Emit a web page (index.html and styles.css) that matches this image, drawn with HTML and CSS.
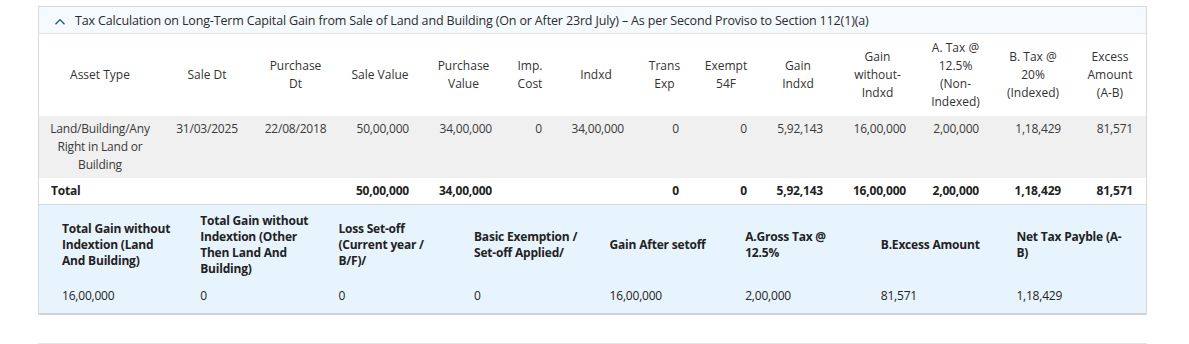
FILE: index.html
```html
<!DOCTYPE html>
<html lang="en">
<head>
<meta charset="utf-8">
<title>Tax Calculation</title>
<link rel="stylesheet" href="styles.css">
</head>
<body>
<div class="page">
  <section class="card">
    <div class="card-head">
      <svg class="chev" width="12" height="7" viewBox="0 0 12 7"><polyline points="1.5,6.2 6,1.6 10.5,6.2" fill="none" stroke="#1f4e79" stroke-width="1.3"/></svg>
      <span class="card-title">Tax Calculation on Long-Term Capital Gain from Sale of Land and Building (On or After 23rd July) – As per Second Proviso to Section 112(1)(a)</span>
    </div>
    <table class="grid">
      <colgroup>
        <col class="w122"><col class="w92"><col class="w85"><col class="w84"><col class="w83"><col class="w50"><col class="w82"><col class="w55"><col class="w68"><col class="w76"><col class="w83"><col class="w73"><col class="w82"><col class="w72">
      </colgroup>
      <thead>
        <tr>
          <th>Asset Type</th>
          <th>Sale Dt</th>
          <th>Purchase<br>Dt</th>
          <th>Sale Value</th>
          <th>Purchase<br>Value</th>
          <th>Imp.<br>Cost</th>
          <th>Indxd</th>
          <th>Trans<br>Exp</th>
          <th>Exempt<br>54F</th>
          <th>Gain<br>Indxd</th>
          <th>Gain<br>without-<br>Indxd</th>
          <th>A. Tax @<br>12.5%<br>(Non-<br>Indexed)</th>
          <th>B. Tax @<br>20%<br>(Indexed)</th>
          <th>Excess<br>Amount<br>(A-B)</th>
        </tr>
      </thead>
      <tbody>
        <tr class="data-row">
          <td class="c">Land/Building/Any<br>Right in Land or<br>Building</td>
          <td class="c">31/03/2025</td>
          <td class="c">22/08/2018</td>
          <td class="r">50,00,000</td>
          <td class="r">34,00,000</td>
          <td class="r">0</td>
          <td class="r">34,00,000</td>
          <td class="r">0</td>
          <td class="r">0</td>
          <td class="r">5,92,143</td>
          <td class="r">16,00,000</td>
          <td class="r">2,00,000</td>
          <td class="r">1,18,429</td>
          <td class="r">81,571</td>
        </tr>
        <tr class="total-row">
          <td class="l">Total</td>
          <td></td>
          <td></td>
          <td class="r">50,00,000</td>
          <td class="r">34,00,000</td>
          <td></td>
          <td></td>
          <td class="r">0</td>
          <td class="r">0</td>
          <td class="r">5,92,143</td>
          <td class="r">16,00,000</td>
          <td class="r">2,00,000</td>
          <td class="r">1,18,429</td>
          <td class="r">81,571</td>
        </tr>
      </tbody>
    </table>
    <div class="summary">
      <div class="lbl">Total Gain without<br>Indextion (Land<br>And Building)</div>
      <div class="lbl">Total Gain without<br>Indextion (Other<br>Then Land And<br>Building)</div>
      <div class="lbl">Loss Set-off<br>(Current year /<br>B/F)/</div>
      <div class="lbl">Basic Exemption /<br>Set-off Applied/</div>
      <div class="lbl">Gain After setoff</div>
      <div class="lbl">A.Gross Tax @<br>12.5%</div>
      <div class="lbl">B.Excess Amount</div>
      <div class="lbl">Net Tax Payble (A-<br>B)</div>
      <div class="val">16,00,000</div>
      <div class="val">0</div>
      <div class="val">0</div>
      <div class="val">0</div>
      <div class="val">16,00,000</div>
      <div class="val">2,00,000</div>
      <div class="val">81,571</div>
      <div class="val">1,18,429</div>
    </div>
  </section>
  <hr class="sep">
</div>
</body>
</html>
```
FILE: styles.css
```css
html, body {
  margin: 0;
  padding: 0;
  background: #ffffff;
}
body {
  font-family: "Open Sans", "Noto Sans", "Liberation Sans", sans-serif;
  font-size: 12px;
  color: #333333;
}
.page {
  padding: 6px 42px 0 38px;
}
.card {
  border: 1px solid #d6d9dc;
  border-bottom: none;
  background: #ffffff;
}
.card-head {
  display: flex;
  align-items: center;
  height: 26px;
  padding-left: 15px;
  background: #f5faff;
  border-bottom: 1px solid #dfe5eb;
}
.chev {
  display: block;
  margin-right: 9px;
  margin-top: 3px;
}
.card-title {
  font-size: 12.5px;
  color: #2b2b2b;
  white-space: nowrap;
  letter-spacing: -0.15px;
}
.grid {
  width: 100%;
  border-collapse: collapse;
  table-layout: fixed;
}
.w122 { width: 122px; }
.w92 { width: 92px; }
.w85 { width: 85px; }
.w84 { width: 84px; }
.w83 { width: 83px; }
.w50 { width: 50px; }
.w82 { width: 82px; }
.w55 { width: 55px; }
.w68 { width: 68px; }
.w76 { width: 76px; }
.w73 { width: 73px; }
.w72 { width: 72px; }
.grid th {
  font-weight: normal;
  text-align: center;
  vertical-align: middle;
  padding: 5px 0;
  line-height: 18px;
  color: #333333;
  white-space: nowrap;
}
.grid td {
  padding: 4px 0;
  line-height: 18px;
  vertical-align: top;
  white-space: nowrap;
  letter-spacing: -0.2px;
}
.grid td.c { text-align: center; }
.grid td.r { text-align: right; padding-right: 13px; }
.grid td.l { text-align: left; padding-left: 12px; }
.data-row td {
  background: #f0f0f0;
  color: #3a3a3a;
}
.total-row td {
  font-weight: bold;
  color: #222222;
  border-bottom: 1px solid #d6d9dc;
}
.summary {
  display: grid;
  grid-template-columns: repeat(8, 1fr);
  column-gap: 30px;
  row-gap: 11px;
  padding: 8px 24px 9px 23px;
  background: #e8f4fd;
  border-bottom: 2px solid #d0d3d6;
}
.lbl {
  align-self: center;
  font-weight: bold;
  line-height: 16px;
  color: #222222;
  white-space: nowrap;
  letter-spacing: -0.2px;
}
.val {
  line-height: 16px;
  color: #222222;
  letter-spacing: -0.2px;
}
.sep {
  margin: 28px 0 0 0;
  border: none;
  border-top: 1px solid #e6e6e6;
  height: 0;
}
```
